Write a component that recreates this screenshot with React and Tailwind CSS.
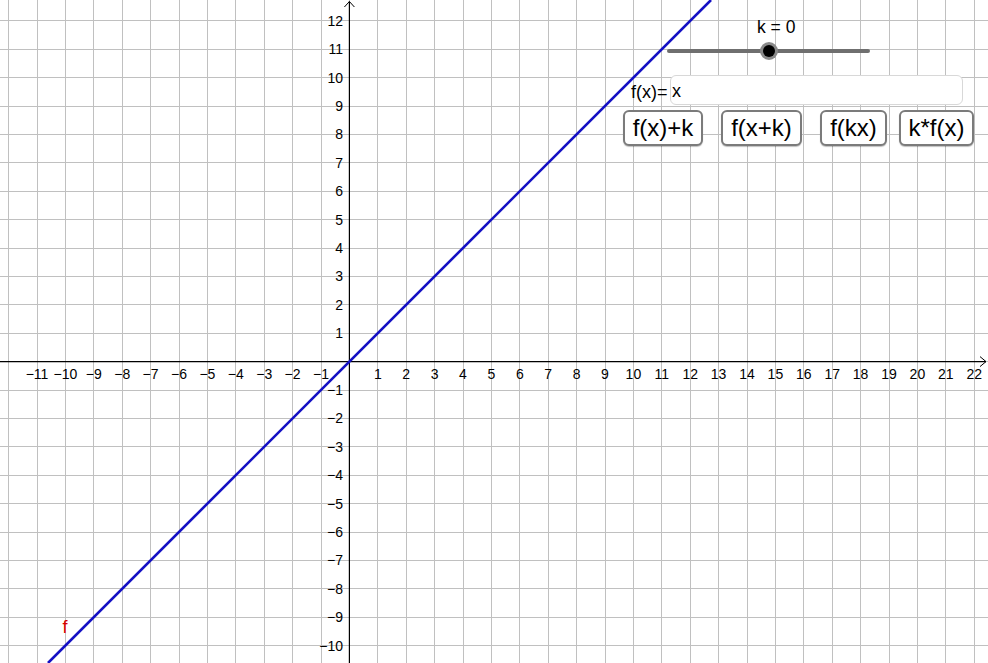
import React from "react";

const U = 28.4;
const X0 = 349.4;
const Y0 = 361.6;
const W = 988;
const H = 663;

const px = (n) => X0 + U * n;
const py = (n) => Y0 - U * n;

function Graph() {
  const vLines = [];
  for (let n = -13; n <= 23; n++) {
    const x = px(n);
    if (x < 0 || x > W) continue;
    vLines.push(x);
  }
  const hLines = [];
  for (let n = -11; n <= 13; n++) {
    const y = py(n);
    if (y < 0 || y > H) continue;
    hLines.push(y);
  }
  const xLabels = [];
  for (let n = -11; n <= 22; n++) if (n !== 0) xLabels.push(n);
  const yLabels = [];
  for (let n = -10; n <= 12; n++) if (n !== 0) yLabels.push(n);

  const fmt = (n) => (n < 0 ? "\u2212" + Math.abs(n) : String(n));

  const xb = (Y0 - H) / U;
  const xt = Y0 / U;
  return (
    <svg
      width={W}
      height={H}
      viewBox={`0 0 ${W} ${H}`}
      className="absolute left-0 top-0"
      style={{ fontFamily: '"Liberation Sans", Arial, sans-serif' }}
    >
      <g stroke="#c0c0c0" strokeWidth="1" shapeRendering="crispEdges">
        {vLines.map((x, i) => (
          <line key={"v" + i} x1={x} y1={0} x2={x} y2={H} />
        ))}
        {hLines.map((y, i) => (
          <line key={"h" + i} x1={0} y1={y} x2={W} y2={y} />
        ))}
      </g>
      <g stroke="#000" strokeWidth="1.2" fill="none">
        <line x1={0} y1={Y0} x2={986} y2={Y0} />
        <line x1={X0} y1={H} x2={X0} y2={1.5} />
        <polyline points={`${980},${Y0 - 5} ${986},${Y0} ${980},${Y0 + 5}`} strokeWidth="1" />
        <polyline points={`${X0 - 5},${7} ${X0},${1.5} ${X0 + 5},${7}`} strokeWidth="1" />
      </g>
      <g fill="#000" fontSize="14">
        {xLabels.map((n) => (
          <text key={"xl" + n} x={px(n)} y={379} textAnchor="middle">
            {fmt(n)}
          </text>
        ))}
        {yLabels.map((n) => (
          <text key={"yl" + n} x={343} y={py(n) + 5} textAnchor="end">
            {fmt(n)}
          </text>
        ))}
      </g>
      <line
        x1={px(xb)}
        y1={H}
        x2={px(xt)}
        y2={0}
        stroke="#1410c4"
        strokeWidth="2.6"
      />
      <text x={62.5} y={633} fill="#d40000" fontSize="18">
        f
      </text>
    </svg>
  );
}

function Button({ children, className }) {
  return (
    <div
      className={
        "h-[36px] flex items-center justify-center bg-white border-2 border-[#7b7b7b] rounded-[6px] shadow-[0_1px_1px_rgba(0,0,0,0.25)] text-[24px] text-black leading-none " +
        className
      }
    >
      {children}
    </div>
  );
}

export default function App() {
  const font = { fontFamily: '"Liberation Sans", Arial, sans-serif' };
  return (
    <div className="relative w-[988px] h-[663px] bg-white overflow-hidden" style={font}>
      <Graph />

      {/* GeoGebra widgets placed on the canvas */}
      <div className="absolute left-[623px] top-[18px] w-[352px] flex flex-col">
        {/* slider */}
        <div className="flex flex-col pl-[44px] w-[247px]">
          <div className="pl-[90px] h-[24px] pt-[1px] text-[17.5px] leading-none text-black">k = 0</div>
          <div className="relative h-[18px] flex items-center">
            <div className="w-[203px] h-[4px] rounded-full bg-[#6f6f6f]" />
            <div className="absolute left-[93px] top-[0px] w-[18px] h-[18px] rounded-full bg-[#8a8a8a] flex items-center justify-center">
              <div className="w-[12px] h-[12px] rounded-full bg-black" />
            </div>
          </div>
        </div>

        {/* input box */}
        <div className="flex items-center mt-[15px] pl-[8px]">
          <div className="w-[39px] text-[18px] leading-none text-black pt-[3px]">f(x)=</div>
          <div className="w-[293px] h-[30px] bg-white border-[1.5px] border-[#d8d8d8] rounded-[6px] flex items-center pl-[1px] pt-[2px] text-[18px] text-black leading-none">
            x
          </div>
        </div>

        {/* buttons */}
        <div className="flex mt-[5px]">
          <Button className="w-[80px]">f(x)+k</Button>
          <Button className="w-[81px] ml-[18px]">f(x+k)</Button>
          <Button className="w-[67px] ml-[18px]">f(kx)</Button>
          <Button className="w-[75px] ml-[12px]">k*f(x)</Button>
        </div>
      </div>
    </div>
  );
}
